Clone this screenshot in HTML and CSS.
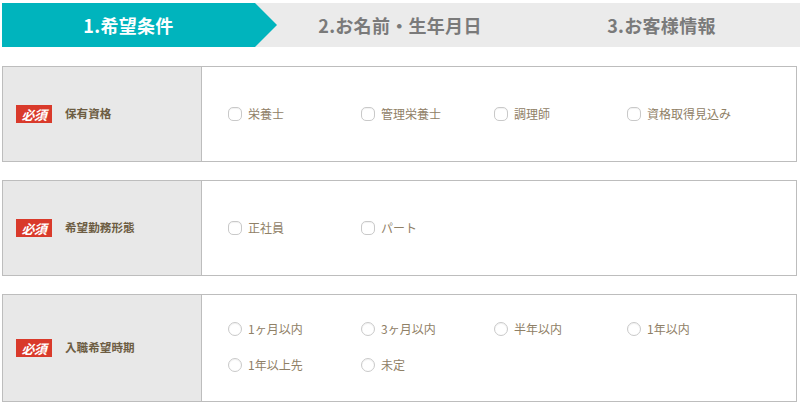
FILE: index.html
```html
<!DOCTYPE html>
<html lang="ja">
<head>
<meta charset="utf-8">
<title>希望条件</title>
<link rel="stylesheet" href="styles.css">
</head>
<body>
<div class="page">
  <div class="steps">
    <div class="step step-active">1.希望条件</div>
    <div class="step">2.お名前・生年月日</div>
    <div class="step step-last">3.お客様情報</div>
  </div>

  <div class="section">
    <div class="label-cell"><span class="badge">必須</span><span class="label">保有資格</span></div>
    <div class="content-cell">
      <div class="options">
        <label class="opt"><span class="box"></span>栄養士</label>
        <label class="opt"><span class="box"></span>管理栄養士</label>
        <label class="opt"><span class="box"></span>調理師</label>
        <label class="opt"><span class="box"></span>資格取得見込み</label>
      </div>
    </div>
  </div>

  <div class="section">
    <div class="label-cell"><span class="badge">必須</span><span class="label">希望勤務形態</span></div>
    <div class="content-cell">
      <div class="options">
        <label class="opt"><span class="box"></span>正社員</label>
        <label class="opt"><span class="box"></span>パート</label>
      </div>
    </div>
  </div>

  <div class="section section-tall">
    <div class="label-cell"><span class="badge">必須</span><span class="label">入職希望時期</span></div>
    <div class="content-cell">
      <div class="options">
        <label class="opt"><span class="radio"></span>1ヶ月以内</label>
        <label class="opt"><span class="radio"></span>3ヶ月以内</label>
        <label class="opt"><span class="radio"></span>半年以内</label>
        <label class="opt"><span class="radio"></span>1年以内</label>
        <label class="opt"><span class="radio"></span>1年以上先</label>
        <label class="opt"><span class="radio"></span>未定</label>
      </div>
    </div>
  </div>
</div>
</body>
</html>
```

FILE: styles.css
```css
html, body {
  margin: 0;
  padding: 0;
  background: #ffffff;
}
body {
  font-family: "Noto Sans CJK JP", "Noto Sans", sans-serif;
}
.page {
  padding: 3px 3px 0 2px;
}
.steps {
  display: grid;
  grid-template-columns: 253px 290px 1fr;
  height: 44px;
  background: #ebebeb;
  margin-right: -3px;
}
.step {
  display: flex;
  align-items: center;
  justify-content: center;
  font-size: 18px;
  font-weight: 700;
  color: #7a7a7a;
  letter-spacing: 0.3px;
  line-height: 1;
}
.step-active {
  position: relative;
  background: #00b4bd;
  color: #ffffff;
}
.step-active::after {
  content: "";
  position: absolute;
  top: 0;
  right: -22px;
  width: 0;
  height: 0;
  border-left: 22px solid #00b4bd;
  border-top: 22px solid transparent;
  border-bottom: 22px solid transparent;
}
.step-last {
  padding-right: 22px;
}
.section {
  display: flex;
  border: 1px solid #bdbdbd;
  margin-top: 18px;
  min-height: 96px;
  box-sizing: border-box;
}
.steps + .section {
  margin-top: 19px;
}
.label-cell {
  width: 185px;
  flex: none;
  background: #e8e8e8;
  border-right: 1px solid #bdbdbd;
  display: flex;
  align-items: center;
  padding-left: 13px;
  gap: 13px;
}
.badge {
  display: inline-flex;
  align-items: center;
  justify-content: center;
  width: 36px;
  height: 18px;
  background: #d93a2b;
  color: #ffffff;
  font-size: 13px;
  font-weight: 700;
  font-style: italic;
  letter-spacing: -0.5px;
  line-height: 1;
}
.label {
  font-size: 11.6px;
  font-weight: 700;
  color: #6d5d43;
  line-height: 1;
}
.content-cell {
  flex: 1;
  display: flex;
  align-items: center;
  padding: 16px 0 16px 26px;
}
.section-tall .content-cell {
  padding: 16px 0 18px 26px;
}
.options {
  display: grid;
  grid-template-columns: repeat(4, 133px);
  grid-auto-rows: 36px;
  align-items: center;
}
.opt {
  display: flex;
  align-items: center;
  gap: 6px;
  font-size: 12px;
  color: #8f8066;
  line-height: 1;
}
.box,
.radio {
  display: inline-block;
  width: 12px;
  height: 12px;
  border: 1px solid #c9c9c9;
  background: #ffffff;
  box-shadow: inset 0 1px 1px rgba(0, 0, 0, 0.06);
  flex: none;
}
.box {
  border-radius: 5px;
}
.radio {
  border-radius: 50%;
}
```
